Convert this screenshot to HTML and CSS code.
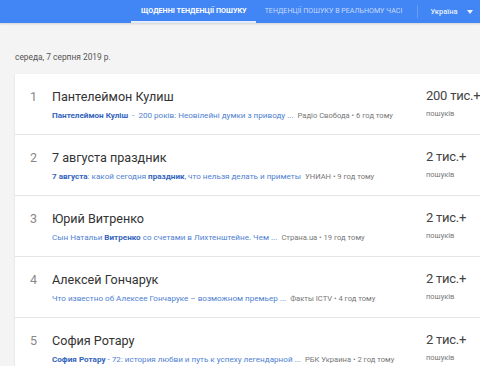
FILE: index.html
```html
<!DOCTYPE html>
<html lang="uk">
<head>
  <meta charset="UTF-8" />
  <meta name="viewport" content="width=device-width, initial-scale=1.0"/>
  <title>Тенденції пошуку</title>
  <link rel="stylesheet" href="styles.css">
</head>
<body>
  <header class="topbar">
    <nav class="tabs">
      <a class="tab active">Щоденні тенденції пошуку</a>
      <a class="tab">Тенденції пошуку в реальному часі</a>
    </nav>
    <div class="divider"></div>
    <div class="geo">Україна <span class="caret"></span></div>
  </header>

  <main class="content">
    <div class="date">середа, 7 серпня 2019 р.</div>

    <div class="card">
      <div class="row">
        <div class="rank">1</div>
        <div class="info">
          <div class="title">Пантелеймон Кулиш</div>
          <div class="snippet"><a><b>Пантелеймон Куліш</b> &nbsp;-&nbsp; 200 років: Неовілейні думки з приводу ...</a> <span class="source">Радіо Свобода • 6 год тому</span></div>
        </div>
        <div class="count">
          <div class="num">200 тис.+</div>
          <div class="label">пошуків</div>
        </div>
      </div>

      <div class="row">
        <div class="rank">2</div>
        <div class="info">
          <div class="title">7 августа праздник</div>
          <div class="snippet"><a><b>7 августа</b>: какой сегодня <b>праздник</b>, что нельзя делать и приметы</a> <span class="source">УНИАН • 9 год тому</span></div>
        </div>
        <div class="count">
          <div class="num">2 тис.+</div>
          <div class="label">пошуків</div>
        </div>
      </div>

      <div class="row">
        <div class="rank">3</div>
        <div class="info">
          <div class="title">Юрий Витренко</div>
          <div class="snippet"><a>Сын Натальи <b>Витренко</b> со счетами в Лихтенштейне. Чем ...</a> <span class="source">Страна.ua • 19 год тому</span></div>
        </div>
        <div class="count">
          <div class="num">2 тис.+</div>
          <div class="label">пошуків</div>
        </div>
      </div>

      <div class="row">
        <div class="rank">4</div>
        <div class="info">
          <div class="title">Алексей Гончарук</div>
          <div class="snippet"><a>Что известно об Алексее Гончаруке – возможном премьер ...</a> <span class="source">Факты ICTV • 4 год тому</span></div>
        </div>
        <div class="count">
          <div class="num">2 тис.+</div>
          <div class="label">пошуків</div>
        </div>
      </div>

      <div class="row">
        <div class="rank">5</div>
        <div class="info">
          <div class="title">София Ротару</div>
          <div class="snippet"><a><b>София Ротару</b> - 72: история любви и путь к успеху легендарной ...</a> <span class="source">РБК Украина • 2 год тому</span></div>
        </div>
        <div class="count">
          <div class="num">2 тис.+</div>
          <div class="label">пошуків</div>
        </div>
      </div>
    </div>
  </main>
</body>
</html>
```

FILE: styles.css
```css
:root {
  --blue: #4285f4;
  --link: #4f7fd2;
  --link-bold: #3464bd;
  --text: #333;
  --muted: #777;
}
body {
  font-family: Roboto, 'Noto Sans', sans-serif;
  background-color: #f4f4f4;
  color: var(--text);
  margin: 0;
  padding: 0;
}
.topbar {
  height: 23px;
  background-color: var(--blue);
  display: flex;
  align-items: stretch;
  box-shadow: 0 1px 2px rgba(0,0,0,0.15);
}
.tabs {
  display: flex;
  margin-left: 131px;
}
.tab {
  display: flex;
  align-items: center;
  padding: 0 9px;
  font-size: 7.1px;
  text-transform: uppercase;
  color: rgba(255,255,255,0.7);
  border-bottom: 2px solid transparent;
  white-space: nowrap;
}
.tab.active {
  padding: 0 9px 0 10px;
  font-size: 7.2px;
  color: #fff;
  font-weight: 700;
  border-bottom-color: #e3ecfb;
}
.divider {
  width: 1px;
  background-color: rgba(255,255,255,0.2);
  margin: 5px 0 5px 6px;
}
.geo {
  display: flex;
  align-items: center;
  margin-left: 12px;
  font-size: 7.5px;
  font-weight: 500;
  color: rgba(255,255,255,0.9);
}
.caret {
  margin-left: 10px;
  border-left: 3px solid transparent;
  border-right: 3px solid transparent;
  border-top: 4px solid rgba(255,255,255,0.9);
}
.content {
  padding: 29px 0 0 15px;
}
.date {
  font-size: 8.4px;
  color: #555;
  line-height: 10px;
  margin-bottom: 12px;
}
.card {
  background-color: #fff;
  box-shadow: 0 1px 2px rgba(0,0,0,0.12);
}
.row {
  display: flex;
  height: 60px;
  border-bottom: 1px solid #e6e6e6;
}
.rank {
  flex-shrink: 0;
  width: 37px;
  padding-top: 15px;
  font-size: 12.5px;
  color: #888;
  text-align: center;
  line-height: 16px;
}
.info {
  flex-shrink: 0;
  width: 374px;
  padding-top: 15px;
}
.title {
  font-size: 12.6px;
  line-height: 16px;
  color: #333;
}
.snippet {
  margin-top: 5px;
  font-size: 8.1px;
  line-height: 10px;
  white-space: nowrap;
}
.snippet a {
  color: var(--link);
}
.snippet b {
  color: var(--link-bold);
  font-weight: 700;
}
.source {
  color: var(--muted);
  margin-left: 2px;
  font-size: 7.6px;
}
.count {
  flex: 1;
  padding-top: 13px;
}
.num {
  font-size: 13px;
  letter-spacing: -0.25px;
  line-height: 18px;
  color: #444;
  white-space: nowrap;
}
.label {
  margin-top: 4px;
  font-size: 7.5px;
  line-height: 10px;
  color: var(--muted);
}
```
